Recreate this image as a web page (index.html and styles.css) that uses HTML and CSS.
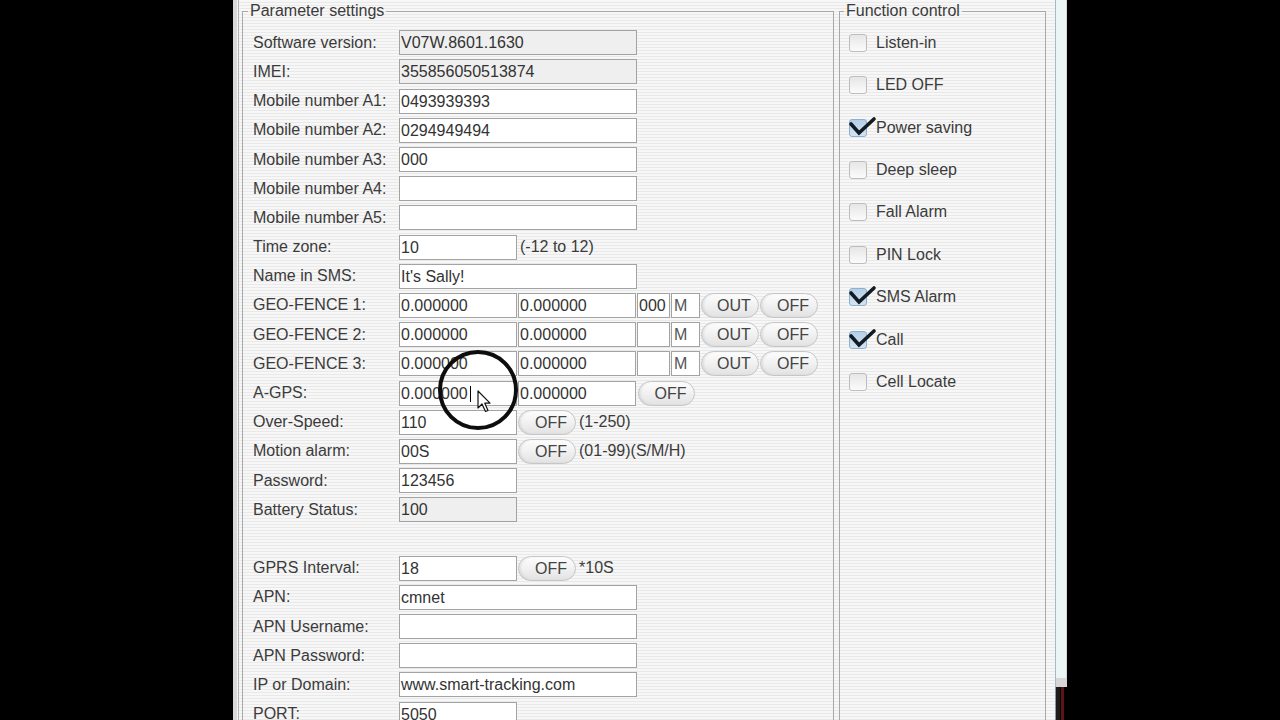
FILE: index.html
```html
<!DOCTYPE html>
<html lang="en">
<head>
  <meta charset="UTF-8">
  <title>Parameter settings</title>
  <link rel="stylesheet" href="styles.css">
</head>
<body>
  <div class="window">
    <div class="edge-left"></div>

    <fieldset class="group params">
      <legend>Parameter settings</legend>
      <div class="row"><span class="label">Software version:</span><span class="field wide readonly">V07W.8601.1630</span></div>
      <div class="row"><span class="label">IMEI:</span><span class="field wide readonly">355856050513874</span></div>
      <div class="row"><span class="label">Mobile number A1:</span><span class="field wide">0493939393</span></div>
      <div class="row"><span class="label">Mobile number A2:</span><span class="field wide">0294949494</span></div>
      <div class="row"><span class="label">Mobile number A3:</span><span class="field wide">000</span></div>
      <div class="row"><span class="label">Mobile number A4:</span><span class="field wide"></span></div>
      <div class="row"><span class="label">Mobile number A5:</span><span class="field wide"></span></div>
      <div class="row"><span class="label">Time zone:</span><span class="field">10</span><span class="hint">(-12 to 12)</span></div>
      <div class="row"><span class="label">Name in SMS:</span><span class="field wide">It's Sally!</span></div>
      <div class="row"><span class="label">GEO-FENCE 1:</span><span class="field">0.000000</span><span class="field">0.000000</span><span class="field radius">000</span><span class="field unit">M</span><span class="btn">OUT</span><span class="btn">OFF</span></div>
      <div class="row"><span class="label">GEO-FENCE 2:</span><span class="field">0.000000</span><span class="field">0.000000</span><span class="field radius"></span><span class="field unit">M</span><span class="btn">OUT</span><span class="btn">OFF</span></div>
      <div class="row"><span class="label">GEO-FENCE 3:</span><span class="field">0.000000</span><span class="field">0.000000</span><span class="field radius"></span><span class="field unit">M</span><span class="btn">OUT</span><span class="btn">OFF</span></div>
      <div class="row"><span class="label">A-GPS:</span><span class="field">0.000000<i class="caret"></i></span><span class="field">0.000000</span><span class="btn agps">OFF</span></div>
      <div class="row"><span class="label">Over-Speed:</span><span class="field">110</span><span class="btn">OFF</span><span class="hint">(1-250)</span></div>
      <div class="row"><span class="label">Motion alarm:</span><span class="field">00S</span><span class="btn">OFF</span><span class="hint">(01-99)(S/M/H)</span></div>
      <div class="row"><span class="label">Password:</span><span class="field">123456</span></div>
      <div class="row"><span class="label">Battery Status:</span><span class="field readonly">100</span></div>
      <div class="row"></div>
      <div class="row"><span class="label">GPRS Interval:</span><span class="field">18</span><span class="btn">OFF</span><span class="hint">*10S</span></div>
      <div class="row"><span class="label">APN:</span><span class="field wide">cmnet</span></div>
      <div class="row"><span class="label">APN Username:</span><span class="field wide"></span></div>
      <div class="row"><span class="label">APN Password:</span><span class="field wide"></span></div>
      <div class="row"><span class="label">IP or Domain:</span><span class="field wide">www.smart-tracking.com</span></div>
      <div class="row"><span class="label">PORT:</span><span class="field">5050</span></div>
    </fieldset>

    <fieldset class="group functions">
      <legend>Function control</legend>
      <div class="check"><span class="box"></span>Listen-in</div>
      <div class="check"><span class="box"></span>LED OFF</div>
      <div class="check on"><span class="box"><svg class="tick" width="28" height="20" viewBox="0 0 28 20"><path d="M2 6 L10 15 L25 1" /></svg></span>Power saving</div>
      <div class="check"><span class="box"></span>Deep sleep</div>
      <div class="check"><span class="box"></span>Fall Alarm</div>
      <div class="check"><span class="box"></span>PIN Lock</div>
      <div class="check on"><span class="box"><svg class="tick" width="28" height="20" viewBox="0 0 28 20"><path d="M2 6 L10 15 L25 1" /></svg></span>SMS Alarm</div>
      <div class="check on"><span class="box"><svg class="tick" width="28" height="20" viewBox="0 0 28 20"><path d="M2 6 L10 15 L25 1" /></svg></span>Call</div>
      <div class="check"><span class="box"></span>Cell Locate</div>
    </fieldset>

    <div class="gutter"></div>
    <div class="edge-right">
      <div class="track"></div>
      <div class="grip"></div>
      <div class="dock"></div>
    </div>
  </div>

  <!-- click highlight + mouse pointer -->
  <div class="click-ring"></div>
  <svg class="pointer" width="16" height="24" viewBox="0 0 16 24">
    <path d="M1 1 L1 18 L5 14 L8.5 21.5 L11 20.5 L7.8 13.2 L13 13.2 Z" />
  </svg>
</body>
</html>
```

FILE: styles.css
```css
body {
  margin: 0;
  background: #000;
  height: 720px;
  overflow: hidden;
  font-family: "Liberation Sans", Arial, sans-serif;
  font-size: 16px;
  color: #3b3b3b;
}
.window {
  margin-left: 233px;
  width: 834px;
  height: 720px;
  display: flex;
  align-items: flex-start;
  padding-top: 2px;
  box-sizing: border-box;
  overflow: hidden;
  background: repeating-linear-gradient(to bottom, #f7f7f7 0, #f7f7f7 2px, #e9e9e9 2px, #e9e9e9 3px);
}
.edge-left {
  width: 9px;
  flex: none;
  align-self: stretch;
  margin-top: -2px;
  background: linear-gradient(to right, #d9d9d9 0, #d9d9d9 4px, #f4f4f4 4px, #f4f4f4 5px, #b4b4b4 5px, #b4b4b4 6px, transparent 6px);
}
.group {
  margin: 0;
  border: 1px solid #a8a8a8;
  min-height: 760px;
  box-sizing: border-box;
  flex: none;
}
.group legend {
  line-height: 18px;
  padding: 0 2px;
  margin-left: -5px;
  color: #3b3b3b;
}
.params {
  width: 592px;
  padding: 8.2px 10px 0 10px;
}
.functions {
  width: 207px;
  margin-left: 5px;
  padding: 1.6px 9px 0 9px;
}
.gutter {
  width: 9px;
  flex: none;
}

/* parameter rows */
.row {
  height: 29.2px;
  display: flex;
  align-items: center;
  gap: 1px;
}
.label {
  width: 145px;
  flex: none;
  white-space: nowrap;
}
.field {
  width: 118px;
  height: 25px;
  line-height: 23px;
  box-sizing: border-box;
  border: 1px solid #a3a3a3;
  background: #fff;
  padding: 0 1px;
  color: #333;
  white-space: nowrap;
  overflow: hidden;
  flex: none;
  position: relative;
}
.field.wide { width: 238px; }
.field.readonly { background: #efefef; }
.field.radius { width: 33px; }
.field.unit { width: 29px; color: #555; padding-left: 2px; }
.caret {
  display: inline-block;
  width: 1px;
  height: 16px;
  background: #000;
  vertical-align: -3px;
  margin-left: 2px;
}
.btn {
  width: 58px;
  height: 25px;
  line-height: 23px;
  box-sizing: border-box;
  border: 1px solid #c6c6c6;
  border-radius: 13px;
  background: linear-gradient(to bottom, #fdfdfd 0%, #f1f1f1 50%, #e2e2e2 100%);
  box-shadow: inset 2px 0 2px rgba(0, 0, 0, 0.07);
  text-align: center;
  padding-left: 8px;
  color: #444;
  flex: none;
}
.btn.agps { width: 57px; margin-left: 1px; }
.hint {
  margin-left: 2px;
  white-space: nowrap;
}

/* function checkboxes */
.check {
  height: 42.4px;
  display: flex;
  align-items: center;
  gap: 9px;
  white-space: nowrap;
}
.box {
  width: 18px;
  height: 18px;
  box-sizing: border-box;
  border: 1px solid #bdbdbd;
  border-radius: 3px;
  background: linear-gradient(to bottom, #e6e6e6, #fbfbfb);
  position: relative;
  flex: none;
}
.check.on .box {
  border-color: #8fb0cc;
  background: linear-gradient(to bottom, #b4cfe7, #d3e3f2);
}
.tick {
  position: absolute;
  left: -1px;
  top: -2px;
  overflow: visible;
}
.tick path {
  fill: none;
  stroke: #121a24;
  stroke-width: 3.6;
  stroke-linecap: round;
  stroke-linejoin: miter;
}

/* right window frame */
.edge-right {
  width: 12px;
  flex: none;
  align-self: stretch;
  margin-top: -2px;
  display: flex;
  flex-direction: column;
}
.track {
  flex: 1;
  border-left: 1px solid #a9b8c1;
  border-right: 1px solid #cfd8d8;
  background: #ebf5f5;
}
.grip {
  height: 9px;
  background: #d6d6d6;
  border-left: 1px solid #a9b8c1;
}
.dock {
  height: 33px;
  background: linear-gradient(to right, #8a9aa2 0, #8a9aa2 1px, #1c1c1c 1px, #1c1c1c 5px, #050505 5px, #050505 6px, #5c1414 6px, #5c1414 9px, #000 9px);
}

.click-ring {
  position: absolute;
  left: 438px;
  top: 350px;
  width: 80px;
  height: 80px;
  box-sizing: border-box;
  border: 4px solid #0d0d0d;
  border-radius: 50%;
}
.pointer {
  position: absolute;
  left: 477px;
  top: 390px;
}
.pointer path {
  fill: #fff;
  stroke: #111;
  stroke-width: 1.2;
  stroke-linejoin: round;
}
```
